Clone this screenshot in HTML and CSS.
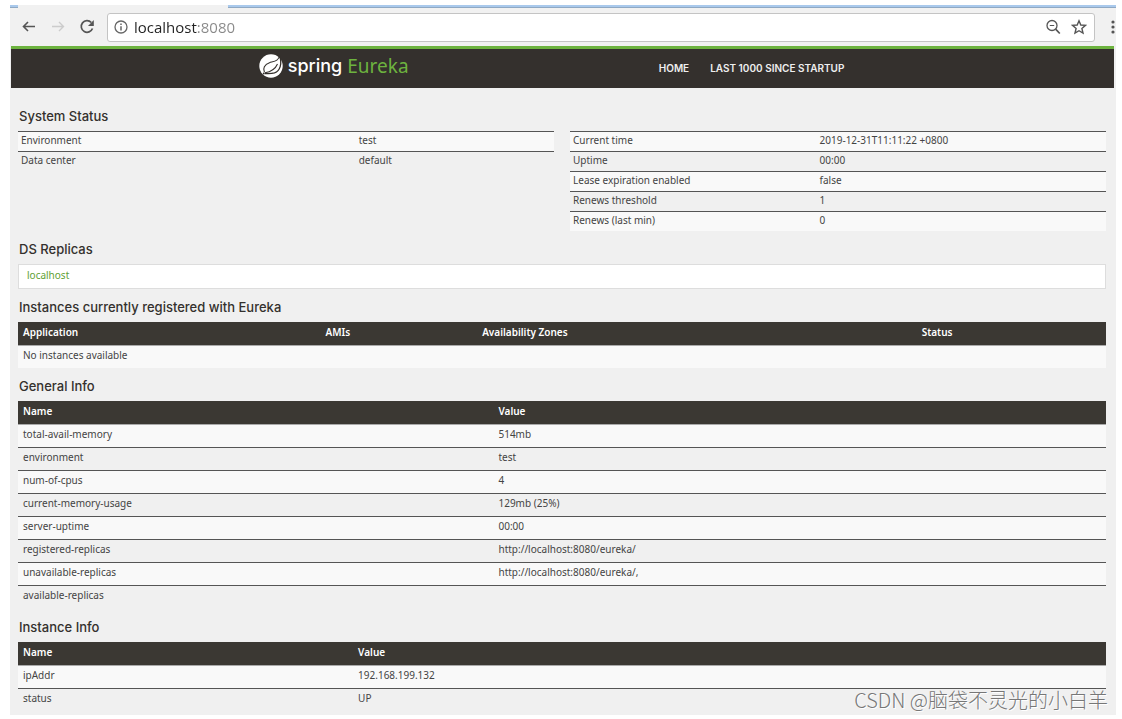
FILE: index.html
```html
<!DOCTYPE html>
<html lang="en">
<head>
<meta charset="utf-8">
<title>Eureka</title>
<link rel="stylesheet" href="styles.css">
</head>
<body>
<div class="window">
  <div class="tabstrip"><span class="tab"></span></div>
  <div class="toolbar">
    <button class="tool" aria-label="Back"><svg width="16" height="16" viewBox="0 0 16 16"><path d="M14 7.500H2.500M7 3l-4.500 4.500 4.500 4.500" fill="none" stroke="#555" stroke-width="1.600"/></svg></button>
    <button class="tool" aria-label="Forward"><svg width="16" height="16" viewBox="0 0 16 16"><path d="M2 7.500h11.500M9 3l4.500 4.500-4.500 4.500" fill="none" stroke="#ccc" stroke-width="1.400"/></svg></button>
    <button class="tool" aria-label="Reload"><svg width="16" height="16" viewBox="0 0 16 16"><path d="M13.500 9.500A5.800 5.800 0 1 1 12.300 3.500" fill="none" stroke="#555" stroke-width="1.700"/><path d="M14.800 1V7H9z" fill="#555"/></svg></button>
    <div class="address">
      <svg width="14" height="14" viewBox="0 0 14 14"><circle cx="7" cy="7" r="6" fill="none" stroke="#666" stroke-width="1.300"/><path d="M7 6.200V10.500M7 3.500V5" stroke="#666" stroke-width="1.500"/></svg>
      <input class="url" type="text" value="localhost:8080" aria-label="Address">
      <button class="tool" aria-label="Zoom"><svg width="16" height="16" viewBox="0 0 16 16"><circle cx="7" cy="6.500" r="5" fill="none" stroke="#555" stroke-width="1.300"/><path d="M4.800 6.500H9.200" stroke="#555"/><path d="M10.600 10.200L14.800 14.500" stroke="#555" stroke-width="1.700"/></svg></button>
      <button class="tool" aria-label="Bookmark"><svg width="16" height="16" viewBox="0 0 16 16"><path d="M8 1.800L9.800 6l4.700.400-3.600 3.100 1.100 4.600L8 11.700l-4 2.400 1.100-4.600L1.500 6.400 6.200 6z" fill="none" stroke="#555" stroke-width="1.400"/></svg></button>
    </div>
    <button class="tool menu" aria-label="Menu"><svg width="4" height="16" viewBox="0 0 4 16" fill="#555"><circle cx="2" cy="3" r="1.600"/><circle cx="2" cy="8" r="1.600"/><circle cx="2" cy="13" r="1.600"/></svg></button>
  </div>
  <header class="navbar">
    <a class="brand" href="#">
      <svg width="24" height="24" viewBox="0 0 24 24"><circle cx="12" cy="12" r="11.700" fill="#fff"/><path d="M20.500 1.500C20 7 15 7.300 10.500 8.700C5.500 10.500 3.500 14.500 5.400 18.200" fill="none" stroke="#34302d" stroke-width="1.100"/><path d="M20.500 1.500C23.500 10 21 17 15.500 18.900C12 20 9 19.600 6 19.600" fill="none" stroke="#34302d" stroke-width="1.300"/><path d="M6 18.800C12 17.800 16.500 14.500 18.500 10" fill="none" stroke="#34302d" stroke-width="1.100"/><circle cx="4.800" cy="19.500" r="1" fill="#34302d"/></svg>
      <span class="spring">spring</span><span class="eureka">Eureka</span>
    </a>
    <nav class="links"><a href="#">HOME</a><a href="#">LAST 1000 SINCE STARTUP</a></nav>
  </header>
  <main class="content">
    <h1>System Status</h1>
    <div class="status">
      <table class="compact">
        <colgroup><col class="w63"><col></colgroup>
        <tr><td>Environment</td><td>test</td></tr>
        <tr><td>Data center</td><td>default</td></tr>
      </table>
      <table class="compact">
        <colgroup><col class="w46"><col></colgroup>
        <tr><td>Current time</td><td>2019-12-31T11:11:22 +0800</td></tr>
        <tr><td>Uptime</td><td>00:00</td></tr>
        <tr><td>Lease expiration enabled</td><td>false</td></tr>
        <tr><td>Renews threshold</td><td>1</td></tr>
        <tr><td>Renews (last min)</td><td>0</td></tr>
      </table>
    </div>
    <h1>DS Replicas</h1>
    <div class="replicas"><a href="#">localhost</a></div>
    <h1>Instances currently registered with Eureka</h1>
    <table class="data">
      <colgroup><col class="application"><col class="amis"><col class="zones"><col></colgroup>
      <thead><tr><th>Application</th><th>AMIs</th><th>Availability Zones</th><th>Status</th></tr></thead>
      <tbody><tr><td colspan="4">No instances available</td></tr></tbody>
    </table>
    <h1>General Info</h1>
    <table class="data general">
      <colgroup><col class="general-name"><col></colgroup>
      <thead><tr><th>Name</th><th>Value</th></tr></thead>
      <tbody>
        <tr><td>total-avail-memory</td><td>514mb</td></tr>
        <tr><td>environment</td><td>test</td></tr>
        <tr><td>num-of-cpus</td><td>4</td></tr>
        <tr><td>current-memory-usage</td><td>129mb (25%)</td></tr>
        <tr><td>server-uptime</td><td>00:00</td></tr>
        <tr><td>registered-replicas</td><td>http://localhost:8080/eureka/</td></tr>
        <tr><td>unavailable-replicas</td><td>http://localhost:8080/eureka/,</td></tr>
        <tr><td>available-replicas</td><td></td></tr>
      </tbody>
    </table>
    <h1>Instance Info</h1>
    <table class="data">
      <colgroup><col class="instance-name"><col></colgroup>
      <thead><tr><th>Name</th><th>Value</th></tr></thead>
      <tbody>
        <tr><td>ipAddr</td><td>192.168.199.132</td></tr>
        <tr><td>status</td><td>UP</td></tr>
      </tbody>
    </table>
  </main>
  <div class="watermark">CSDN @脑袋不灵光的小白羊</div>
</div>
</body>
</html>
```
FILE: styles.css
```css
* { box-sizing: border-box; }
body { margin: 0; background: #fff; color: #444; font: 10px/14px "Noto Sans", sans-serif; }
a { text-decoration: none; }
svg { display: block; flex: none; }
.window { position: relative; margin: 5px 6px 3px 10px; background: #f0f0f0; overflow: hidden; }
.tabstrip { height: 3px; padding-left: 8px; background: #a9c9ec; border-bottom: 1px solid #8fa9c4; }
.tab { display: block; width: 210px; height: 3px; background: #f1f1f1; }
.toolbar { display: flex; align-items: center; height: 38px; padding: 0 1px 0 11px; gap: 13px; background: #f1f1f1; }
.tool { padding: 0; border: 0; background: none; }
.address { flex: 1; display: flex; align-items: center; gap: 10px; height: 29px; margin-left: -1px; padding: 0 7px 0 6px; background: #fff; border: 1px solid #c4c4c4; border-radius: 3px; }
.url { flex: 1; min-width: 0; margin-left: -4px; padding: 0; border: 0; outline: 0; font: 15px/20px "Open Sans", sans-serif; color: transparent; background: linear-gradient(to right, #222 63px, #888 63px); -webkit-background-clip: text; background-clip: text; }
.menu { margin-left: 3px; }
.navbar { display: flex; align-items: center; height: 42px; margin: 0 2px 0 1px; padding-left: 22.4%; background: #34302d; border-top: 3px solid #6db33f; }
.brand { display: flex; align-items: center; width: 400px; gap: 5px; padding-bottom: 6px; color: #fff; line-height: 24px; }
.spring { font-family: Inter, sans-serif; font-size: 18px; font-weight: 500; }
.eureka { color: #6db33f; font-family: "Noto Sans", sans-serif; font-size: 19px; }
.links { display: flex; gap: 21px; padding-bottom: 2px; }
.links a { color: #eee; font: 600 10px/14px Inter, sans-serif; }
.content { padding: 10px 10px 4px 8px; }
h1 { margin: 0; padding: 8px 1px 5px; color: #34302d; font: 500 13px/20px Inter, sans-serif; }
table { width: 100%; table-layout: fixed; border-spacing: 0; }
td, th { text-align: left; }
td { border-top: 1px solid #555; }
tr:nth-child(odd) td { background: #f9f9f9; }
.status { display: grid; grid-template-columns: 1fr 1fr; align-items: start; gap: 16px; }
.compact td { height: 20px; padding: 0 3px 3px; }
.data td, .data th { height: 23px; padding: 0 5px 4px; }
.data th { color: #fff; background: #3b3833; font-weight: 600; }
.data tbody tr:first-child td { border-top-color: #aaa; }
.general { margin-bottom: 1px; }
.replicas { height: 25px; padding: 3px 8px; background: #fff; border: 1px solid #ddd; }
.replicas a { color: #5fa134; }
.w63 { width: 63%; }
.w46 { width: 46%; }
.application { width: 27.8%; }
.amis { width: 14.4%; }
.zones { width: 40.4%; }
.general-name { width: 43.7%; }
.instance-name { width: 30.8%; }
.watermark { position: absolute; right: 8px; bottom: 2px; color: #777; font: 300 20px/26px "Noto Sans CJK SC", sans-serif; text-shadow: 1px 1px 0 #fff; }
```
